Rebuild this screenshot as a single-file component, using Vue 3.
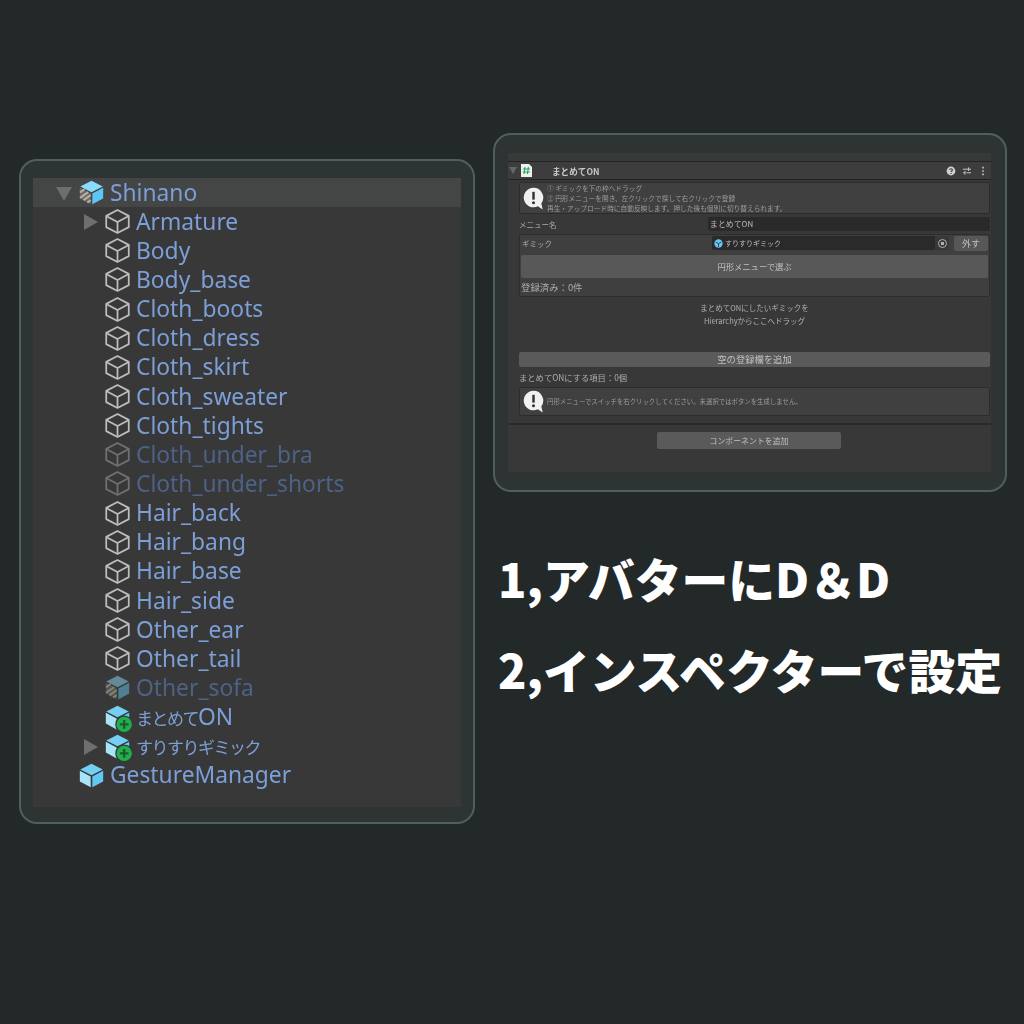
<template>
  <div class="page">
    <div class="card hierarchy-card">
      <div class="tree">
        <div
          v-for="row in rows"
          :key="row.id"
          class="row"
          :class="[`depth-${row.depth}`, { root: row.root, off: row.off }]"
        >
          <span class="arrow" :class="row.arrow"></span>
          <svg class="cube" viewBox="0 0 24 24">
            <template v-if="row.icon === 'plain'">
              <path d="M12 1 22.8 6.6v10.8L12 23 1.2 17.4V6.6Z" fill="none" stroke="currentColor" stroke-width="1.7" stroke-linejoin="round" />
              <path d="M1.6 6.9 12 12.4 22.4 6.9M12 12.4V22.6" fill="none" stroke="currentColor" stroke-width="1.7" />
            </template>
            <template v-else-if="row.icon === 'hatched'">
              <path d="M12 .6 22.8 6.2 12 11.8 1.2 6.2Z" :fill="row.off ? '#64899a' : '#8adcfd'" />
              <path d="M12.8 12.9 23.2 7.4v10.4L12.8 23.4Z" :fill="row.off ? '#4f7f92' : '#5cc6f7'" />
              <path d="M11.2 12.9.8 7.4v10.4L11.2 23.4Z" :fill="row.off ? '#55534f' : '#6d6a66'" />
              <path d="M1 12 5.4 8.8M1 17.2 8.8 11.6M4.4 19.4 11.2 14.6M8 21.6 11.2 19.4" :stroke="row.off ? '#85817a' : '#b5afa5'" stroke-width="2" />
            </template>
            <template v-else>
              <path d="M12 .6 22.8 6.2 12 11.8 1.2 6.2Z" fill="#74cff2" />
              <path d="M12.8 12.9 23.2 7.4v10.4L12.8 23.4Z" fill="#62c8f3" />
              <path d="M11.2 12.9.8 7.4v10.4L11.2 23.4Z" fill="#a8e3f8" />
              <template v-if="row.icon === 'added'">
                <circle cx="18.4" cy="18.6" r="8.6" fill="#383838" />
                <circle cx="18.4" cy="18.6" r="7.4" fill="#1fb04b" />
                <path d="M18.4 14.4v8.4M14.2 18.6h8.4" stroke="#1c5a30" stroke-width="2.2" />
              </template>
            </template>
          </svg>
          <span class="label"><span v-if="row.kana" class="kana">{{ row.kana }}</span>{{ row.name }}</span>
        </div>
      </div>
    </div>

    <div class="right-col">
      <div class="card inspector-card">
        <div class="inspector">
          <div class="top-strip"></div>
          <div class="comp-header">
            <span class="arrow-small"></span>
            <svg class="script-icon" viewBox="0 0 11 13">
              <path d="M0 0h8l3 3v10H0Z" fill="#eef2ee" />
              <path d="M4 3 3 10M7.4 3l-1 7M2 5h7M1.8 8h7" stroke="#27a25c" stroke-width="1.1" />
            </svg>
            <span class="comp-title">まとめてON</span>
            <svg class="head-icon" viewBox="0 0 10 10">
              <circle cx="5" cy="5" r="4.4" fill="#cfcfcf" />
              <path d="M3.6 3.9C3.7 2.4 6.4 2.4 6.4 3.9 6.4 5 5 4.9 5 6.1M5 7v1" fill="none" stroke="#3a3a3a" stroke-width="1.1" />
            </svg>
            <svg class="head-icon" viewBox="0 0 10 10">
              <path d="M1 3.2h8M4.5 6.8h4.5M6.6 1.4v3.6M3 5v3.6M1 6.8h2" fill="none" stroke="#c8c8c8" stroke-width="1" />
            </svg>
            <svg class="head-icon dots" viewBox="0 0 10 10">
              <path d="M5 .8v1.6M5 4.2v1.6M5 7.6v1.6" stroke="#c8c8c8" stroke-width="1.6" />
            </svg>
          </div>

          <div class="body">
            <div class="help first">
              <svg class="help-icon" viewBox="0 0 22 24">
                <path d="M11 .8a10.2 10.2 0 1 0 4.6 19.3L20.6 23.4 19.2 17A10.2 10.2 0 0 0 11 .8Z" fill="#f1f1f1" />
                <path d="M11 5v8.2" stroke="#333" stroke-width="2.6" />
                <circle cx="11" cy="16.4" r="1.6" fill="#333" />
              </svg>
              <div class="help-lines">
                <div>① ギミックを下の枠へドラッグ</div>
                <div>② 円形メニューを開き、左クリックで探して右クリックで登録</div>
                <div>再生・アップロード時に自動反映します。押した後も個別に切り替えられます。</div>
              </div>
            </div>

            <div class="field">
              <span class="field-label">メニュー名</span>
              <span class="input">まとめてON</span>
            </div>

            <div class="gimmick-box">
              <div class="gimmick-row">
                <span class="field-label">ギミック</span>
                <span class="object-field">
                  <svg class="mini-cube" viewBox="0 0 10 10">
                    <circle cx="5" cy="5" r="4.6" fill="#62c8f3" />
                    <path d="M2 3.4 5 5.2l3-1.8M5 5.2V9" fill="none" stroke="#2c3a42" stroke-width="1" />
                  </svg>
                  すりすりギミック
                  <span class="picker"><i></i></span>
                </span>
                <span class="small-btn">外す</span>
              </div>
              <div class="wide-btn">円形メニューで選ぶ</div>
              <div class="count">登録済み：0件</div>
            </div>

            <div class="drop">まとめてONにしたいギミックを<br />Hierarchyからここへドラッグ</div>

            <div class="add-empty">空の登録欄を追加</div>
            <div class="items">まとめてONにする項目：0個</div>

            <div class="help second">
              <svg class="help-icon" viewBox="0 0 22 24">
                <path d="M11 .8a10.2 10.2 0 1 0 4.6 19.3L20.6 23.4 19.2 17A10.2 10.2 0 0 0 11 .8Z" fill="#f1f1f1" />
                <path d="M11 5v8.2" stroke="#333" stroke-width="2.6" />
                <circle cx="11" cy="16.4" r="1.6" fill="#333" />
              </svg>
              <div class="help-lines tight">円形メニューでスイッチを右クリックしてください。未選択ではボタンを生成しません。</div>
            </div>
          </div>

          <div class="footer">
            <div class="add-component">コンポーネントを追加</div>
          </div>
        </div>
      </div>

      <div class="steps">
        <div class="step">1,アバターにD＆D</div>
        <div class="step">2,インスペクターで設定</div>
      </div>
    </div>
  </div>
</template>

<script setup>
const plain = (name, extra = {}) => ({ name, depth: 1, icon: 'plain', ...extra })

const rows = [
  { name: 'Shinano', depth: 0, icon: 'hatched', arrow: 'down', root: true },
  plain('Armature', { arrow: 'right' }),
  plain('Body'),
  plain('Body_base'),
  plain('Cloth_boots'),
  plain('Cloth_dress'),
  plain('Cloth_skirt'),
  plain('Cloth_sweater'),
  plain('Cloth_tights'),
  plain('Cloth_under_bra', { off: true }),
  plain('Cloth_under_shorts', { off: true }),
  plain('Hair_back'),
  plain('Hair_bang'),
  plain('Hair_base'),
  plain('Hair_side'),
  plain('Other_ear'),
  plain('Other_tail'),
  { name: 'Other_sofa', depth: 1, icon: 'hatched', off: true },
  { kana: 'まとめて', name: 'ON', depth: 1, icon: 'added' },
  { kana: 'すりすりギミック', name: '', depth: 1, icon: 'added', arrow: 'right' },
  { name: 'GestureManager', depth: 0, icon: 'prefab' },
].map((row, id) => ({ ...row, id }))
</script>

<style>
body {
  background: #232829;
}
</style>

<style scoped>
.page {
  width: 1024px;
  height: 1024px;
  background: #232829;
  display: flex;
  align-items: flex-start;
  gap: 18px;
  padding-left: 19px;
  box-sizing: border-box;
  font-family: "Noto Sans CJK JP", "Noto Sans", sans-serif;
  overflow: hidden;
}

.card {
  background: #2e3433;
  border: 2px solid #4f6058;
  border-radius: 18px;
  box-sizing: border-box;
}

.hierarchy-card {
  width: 456px;
  height: 665px;
  margin-top: 159px;
  padding: 17px 12px 15px;
}

.tree {
  height: 100%;
  background: #383838;
  filter: blur(0.6px);
}

.row {
  height: 29.15px;
  display: flex;
  align-items: center;
  position: relative;
  color: #bdbdbd;
}

.row.root {
  background: #444545;
}

.depth-0 {
  padding-left: 46px;
}

.depth-1 {
  padding-left: 72px;
}

.arrow {
  position: absolute;
  width: 0;
  height: 0;
}

.arrow.down {
  left: 23px;
  top: 9px;
  border-left: 8px solid transparent;
  border-right: 8px solid transparent;
  border-top: 14px solid #6e6e6e;
}

.arrow.right {
  left: 51px;
  top: 7px;
  border-top: 8px solid transparent;
  border-bottom: 8px solid transparent;
  border-left: 14px solid #6e6e6e;
}

.cube {
  width: 25px;
  height: 25px;
  flex: none;
  overflow: visible;
}

.label {
  margin-left: 6px;
  font-family: "Noto Sans", "Noto Sans CJK JP", sans-serif;
  font-size: 22.8px;
  line-height: 26px;
  color: #7c9fd8;
  white-space: nowrap;
}

.kana {
  font-family: "Noto Sans CJK JP", sans-serif;
  font-size: 17px;
  line-height: 26px;
  letter-spacing: -1.5px;
}

.row.off {
  color: #707070;
}

.row.off .label {
  color: #4d6286;
}

.right-col {
  width: 514px;
  margin-top: 133px;
}

.inspector-card {
  height: 359px;
  padding: 18px 14px 18px 13px;
}

.inspector {
  height: 100%;
  background: #383838;
  color: #b4b4b4;
  display: flex;
  flex-direction: column;
  filter: blur(0.45px);
}

.top-strip {
  height: 8px;
  background: #363b3a;
}

.comp-header {
  height: 19px;
  display: flex;
  align-items: center;
  background: #3d3d3d;
  border-top: 1px solid #232323;
  border-bottom: 1px solid #232323;
  box-sizing: border-box;
  padding-right: 3px;
}

.arrow-small {
  width: 0;
  height: 0;
  margin-left: 1px;
  border-left: 4px solid transparent;
  border-right: 4px solid transparent;
  border-top: 7px solid #5e6a66;
}

.script-icon {
  width: 11px;
  height: 13px;
  margin-left: 4px;
}

.comp-title {
  margin-left: 20px;
  margin-right: auto;
  font-size: 8.6px;
  font-weight: 700;
  color: #c8c8c8;
}

.head-icon {
  width: 10px;
  height: 10px;
  margin-left: 6px;
}

.body {
  padding: 2px 1px 0 11px;
}

.help {
  display: flex;
  align-items: center;
  background: #404040;
  border: 1px solid #2c2c2c;
  border-radius: 2px;
  box-sizing: border-box;
}

.help.first {
  height: 32px;
}

.help.second {
  height: 29px;
}

.help-icon {
  width: 21px;
  height: 23px;
  flex: none;
  margin: 0 3px;
}

.help-lines {
  font-size: 6.7px;
  line-height: 10px;
  color: #9c9c9c;
  white-space: nowrap;
}

.help-lines.tight {
  font-size: 6.4px;
}

.field {
  display: flex;
  align-items: center;
  height: 14px;
  margin-top: 3px;
  font-size: 7.9px;
}

.field-label {
  width: 189px;
  flex: none;
  font-size: 7.5px;
  color: #adadad;
}

.input {
  flex: 1;
  height: 14px;
  line-height: 14px;
  padding-left: 2px;
  background: #2a2a2a;
  border-radius: 2px;
  color: #bcbcbc;
}

.gimmick-box {
  height: 63px;
  margin-top: 3px;
  padding: 1px;
  background: #3f3f3f;
  border: 1px solid #2d2d2d;
  border-radius: 2px;
  box-sizing: border-box;
}

.gimmick-row {
  display: flex;
  align-items: center;
  height: 14px;
}

.gimmick-row .field-label {
  width: 191px;
  padding-left: 1px;
  box-sizing: border-box;
}

.object-field {
  flex: 1;
  height: 14px;
  display: flex;
  align-items: center;
  gap: 2px;
  padding-left: 2px;
  background: #2a2a2a;
  border-radius: 2px;
  font-size: 7px;
  color: #bcbcbc;
}

.mini-cube {
  width: 9px;
  height: 9px;
}

.picker {
  margin-left: auto;
  width: 14px;
  height: 14px;
  display: flex;
  align-items: center;
  justify-content: center;
  background: #383838;
}

.picker i {
  width: 9px;
  height: 9px;
  border: 1px solid #b0b0b0;
  border-radius: 50%;
  background: radial-gradient(circle, #b0b0b0 0 1.5px, transparent 2px);
  box-sizing: border-box;
}

.small-btn {
  width: 34px;
  height: 15px;
  margin-left: 5px;
  line-height: 15px;
  text-align: center;
  background: #575757;
  border-radius: 2px;
  font-size: 9px;
  color: #c0c0c0;
}

.wide-btn {
  height: 23px;
  line-height: 23px;
  margin-top: 5px;
  text-align: center;
  background: #585858;
  border-radius: 2px;
  font-size: 8.3px;
  color: #c0c0c0;
}

.count {
  margin-top: 2px;
  font-size: 9.4px;
  line-height: 14px;
  color: #adadad;
}

.drop {
  height: 55px;
  padding-top: 4px;
  box-sizing: border-box;
  text-align: center;
  font-size: 7.5px;
  line-height: 13px;
  color: #b0b0b0;
}

.add-empty {
  height: 15px;
  line-height: 15px;
  text-align: center;
  background: #5a5a5a;
  border-radius: 2px;
  font-size: 9.3px;
  color: #c0c0c0;
}

.items {
  height: 20px;
  line-height: 20px;
  font-size: 8.3px;
  color: #adadad;
}

.footer {
  margin-top: 7px;
  flex: 1;
  border-top: 2px solid #292929;
  display: flex;
  justify-content: center;
  padding-top: 7px;
  padding-right: 1px;
}

.add-component {
  width: 184px;
  height: 17px;
  line-height: 17px;
  text-align: center;
  background: #5a5a5a;
  border-radius: 2px;
  font-size: 7.9px;
  color: #c0c0c0;
}

.steps {
  margin-top: 52px;
  margin-left: 5px;
  display: flex;
  flex-direction: column;
  gap: 23px;
}

.step {
  font-size: 46.8px;
  line-height: 68px;
  font-weight: 900;
  color: #ffffff;
  white-space: nowrap;
}
</style>
